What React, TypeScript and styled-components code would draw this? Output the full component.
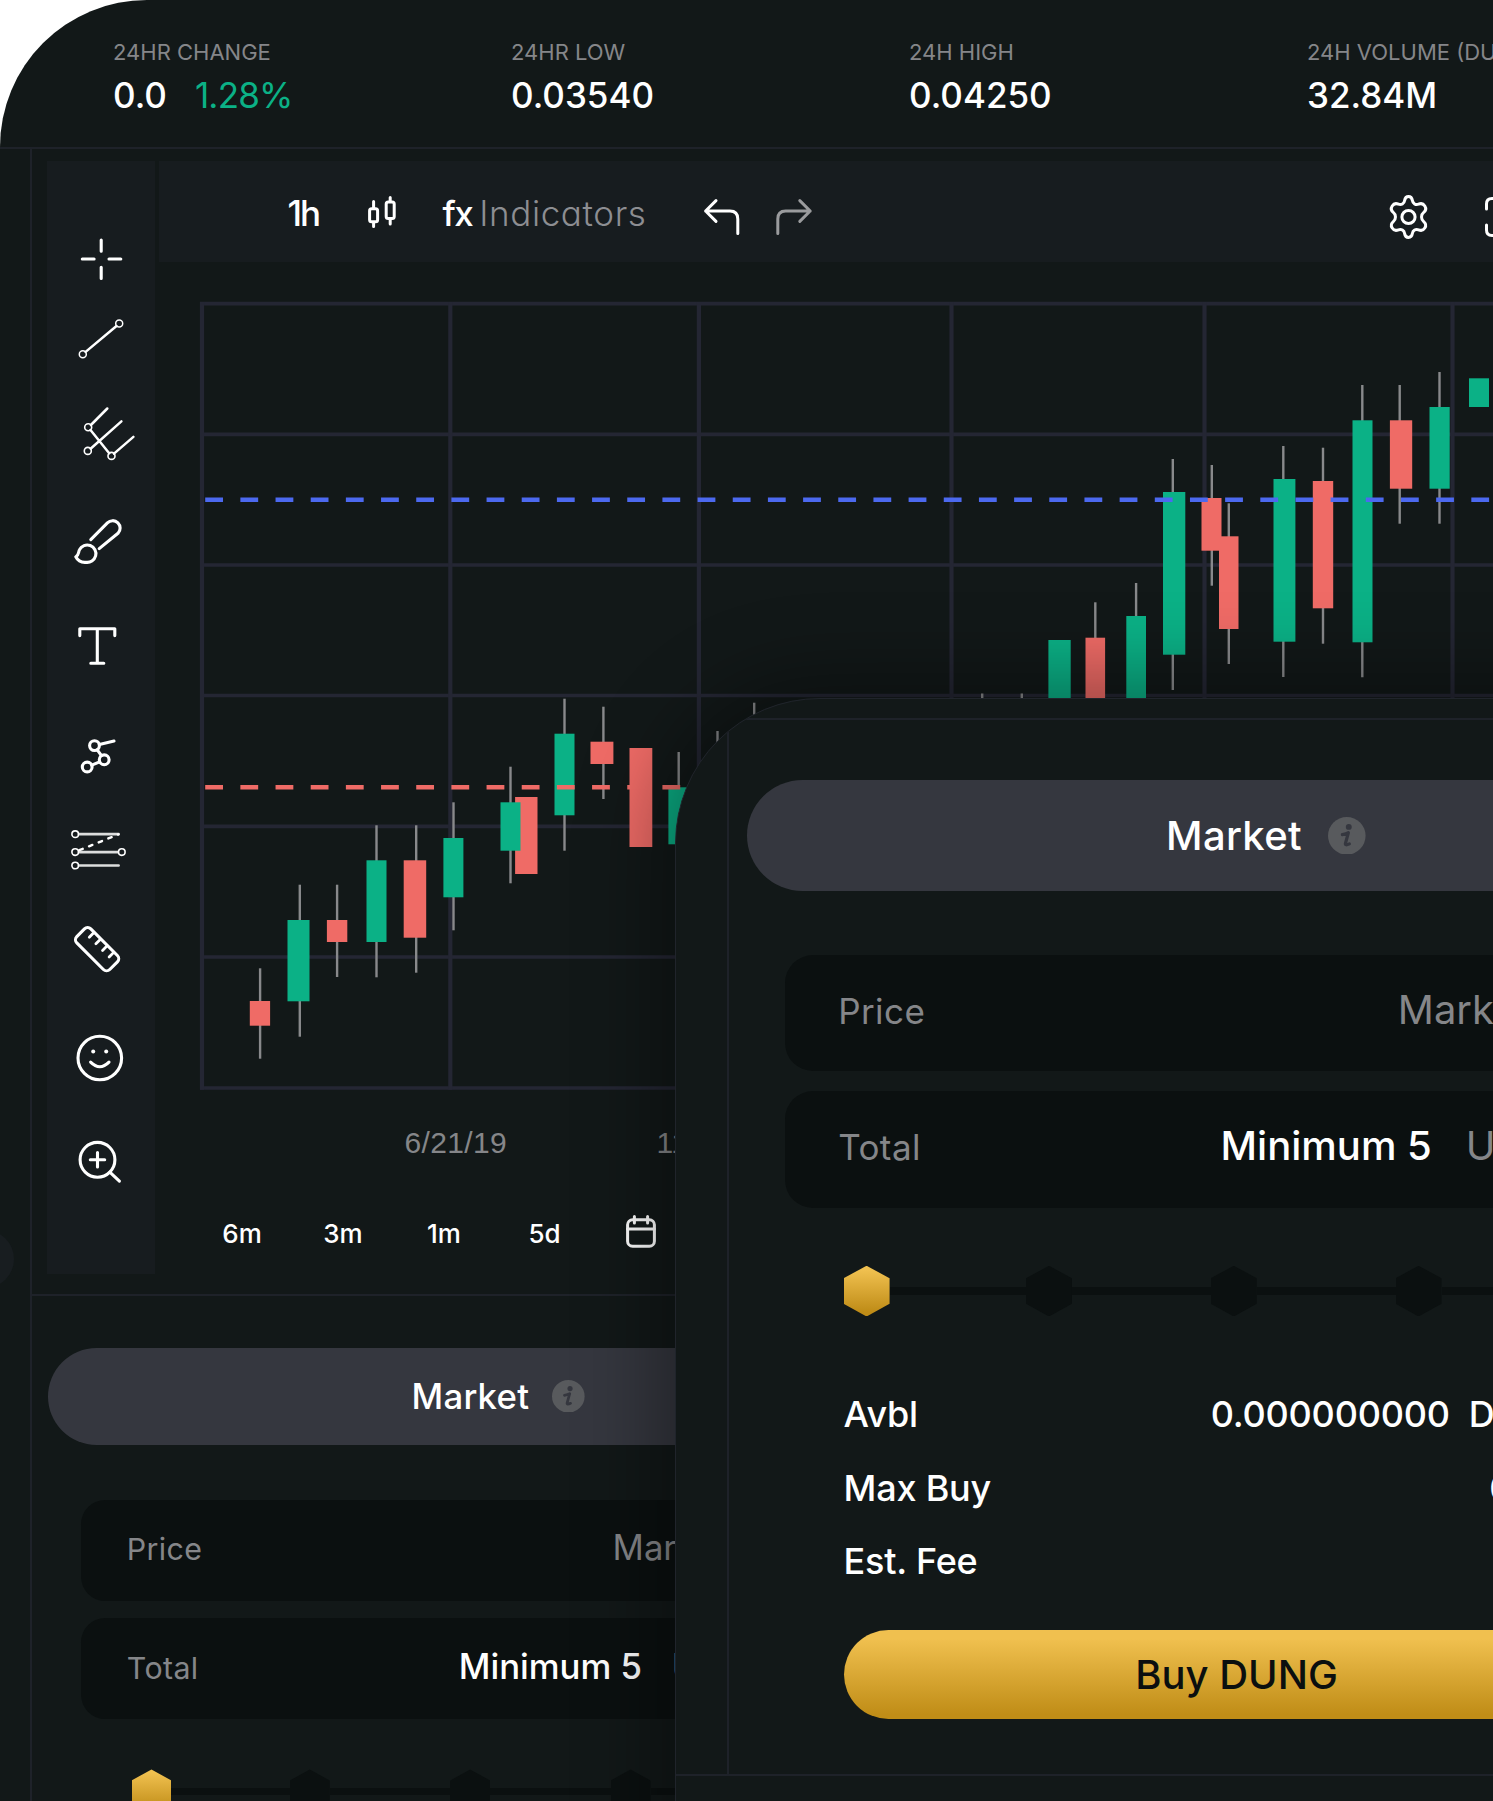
import React from 'react';
import styled, { createGlobalStyle } from 'styled-components';

const c = {
  bg: '#121818',
  panel: '#171c1f',
  field: '#0b1010',
  line: '#1e2229',
  grid: '#242633',
  up: '#0bb186',
  down: '#ef6b66',
  wick: '#88898b',
  muted: '#858689',
  pill: '#35373f',
};

const GlobalStyle = createGlobalStyle`
  body {
    margin: 0;
    background: #fff;
    overflow: hidden;
  }
  *, *::before, *::after { box-sizing: border-box; }
`;

const Frame = styled.div`
  position: relative;
  width: 1493px;
  height: 1801px;
  overflow: hidden;
  display: flex;
  flex-direction: column;
  background: ${c.bg};
  border-top-left-radius: 147px;
  color: #fff;
  font-family: Inter, 'Liberation Sans', sans-serif;
  white-space: nowrap;
`;

/* ---------- header stats ---------- */

const Header = styled.header`
  flex: none;
  height: 149px;
  padding: 38px 0 0 113px;
  display: grid;
  grid-template-columns: repeat(4, 398px);
  border-bottom: 2px solid ${c.line};
`;

const Stat = styled.div`
  display: flex;
  flex-direction: column;
`;

const StatLabel = styled.span`
  font-size: 22px;
  line-height: 28px;
  color: ${c.muted};
`;

const StatValue = styled.span`
  display: flex;
  gap: 28px;
  margin-top: 8px;
  font-size: 35px;
  line-height: 43px;
  font-weight: 500;
`;

const Gain = styled.span`
  color: ${c.up};
  font-weight: 400;
  letter-spacing: -0.8px;
`;

/* ---------- body ---------- */

const Body = styled.div`
  flex: 1;
  min-height: 0;
  display: flex;
`;

const Gutter = styled.div<{ $w: number }>`
  position: relative;
  flex: none;
  width: ${(p) => p.$w}px;
  border-right: 2px solid ${c.line};
`;

const DrawerHandle = styled.div`
  position: absolute;
  left: -44px;
  top: 1081px;
  width: 58px;
  height: 58px;
  border-radius: 50%;
  background: #181d20;
`;

const Main = styled.main`
  flex: 1;
  min-width: 0;
`;

const Terminal = styled.section`
  display: flex;
  gap: 4px;
  height: 1147px;
  padding: 12px 0 0 14.5px;
  border-bottom: 2px solid ${c.line};
`;

const Sidebar = styled.nav`
  flex: none;
  width: 108px;
  height: 1112.5px;
  background: ${c.panel};
  display: flex;
  flex-direction: column;
  align-items: center;
  padding-right: 1.4px;
`;

const Tool = styled.svg<{ $gap: number }>`
  flex: none;
  width: 64px;
  height: 64px;
  margin-top: ${(p) => p.$gap}px;
  overflow: visible;
  fill: none;
  stroke: #fff;
  stroke-width: 3.1;
  stroke-linecap: round;
  stroke-linejoin: round;
`;

const ChartColumn = styled.div`
  flex: 1;
  min-width: 0;
`;

const Toolbar = styled.div`
  height: 101px;
  padding-left: 127px;
  background: ${c.panel};
  display: grid;
  grid-template-columns: 81px 75px 262px 72px 612px 96px 42px;
  align-items: center;
`;

const ToolText = styled.span<{ $spacing?: number; $shift?: number }>`
  font-size: 35px;
  line-height: 42px;
  font-weight: 500;
  letter-spacing: ${(p) => p.$spacing ?? 0}px;
  padding: 3px 0 0 ${(p) => p.$shift ?? 0}px;
`;

const IndicatorsButton = styled.span`
  padding-top: 3px;
`;

const Indicators = styled.span`
  margin-left: 7px;
  font-weight: 300;
  font-size: 35px;
  letter-spacing: 0.6px;
  font-feature-settings: 'cv11';
  color: #8d8e92;
`;

const BarIcon = styled.svg<{ $dim?: boolean }>`
  display: block;
  overflow: visible;
  fill: none;
  stroke: ${(p) => (p.$dim ? '#9a9b9d' : '#fff')};
  stroke-width: 3;
  stroke-linecap: round;
  stroke-linejoin: round;
`;

const CalendarIcon = styled(BarIcon)`
  margin: -4px 0 0 32px;
`;

const Plot = styled.svg`
  display: block;
  width: 1334.5px;
  height: 838px;
`;

const Dates = styled.div`
  display: grid;
  grid-template-columns: repeat(4, 252px);
  padding: 25px 0 0 246px;
  height: 103.5px;
  font-family: 'Liberation Sans', Arial, sans-serif;
  font-size: 30px;
  line-height: 36px;
  letter-spacing: 0.35px;
  color: ${c.muted};
`;

const Ranges = styled.div`
  display: grid;
  grid-template-columns: 101px 101px 100.5px 100px auto;
  padding-left: 33px;
  height: 60px;
  align-items: center;
`;

const Range = styled.span`
  width: 101px;
  text-align: center;
  font-size: 26px;
  font-weight: 500;
  line-height: 32px;
`;

/* ---------- order form (sized in em so it can be shown at two scales) ---------- */

const Form = styled.section<{ $size: number; $top: number; $left: number }>`
  font-size: ${(p) => p.$size}px;
  padding: ${(p) => p.$top}px 0 0 ${(p) => p.$left}px;
  width: 26.4em;
`;

const TypePill = styled.div`
  width: 25.93em;
  height: 2.79em;
  border-radius: 1.4em;
  background: ${c.pill};
  display: flex;
  align-items: center;
  justify-content: center;
  gap: 0.66em;
  font-weight: 500;
  letter-spacing: 0.008em;
`;

const InfoIcon = styled.svg`
  width: 0.94em;
  height: 0.94em;
  display: block;
`;

const Field = styled.div<{ $label: number }>`
  width: 24.05em;
  height: 2.9125em;
  margin-left: 0.94em;
  border-radius: 0.7em;
  background: ${c.field};
  display: grid;
  grid-template-columns: ${(p) => p.$label}em auto auto;
  justify-content: start;
  align-items: baseline;
  padding: 0.7725em 0 0 1.33em;
  & + & { margin-top: 0.505em; }
`;

const Fields = styled.div`
  padding-top: 1.585em;
`;

const FieldLabel = styled.span`
  font-size: 0.875em;
  letter-spacing: 0.012em;
  color: ${c.muted};
`;

const FieldValue = styled.span<{ $muted?: boolean }>`
  color: ${(p) => (p.$muted ? c.muted : '#fff')};
  font-weight: ${(p) => (p.$muted ? 400 : 500)};
  line-height: 1.21;
  & + & { margin-left: 0.85em; }
`;

const Slider = styled.div`
  display: flex;
  align-items: center;
  margin: 1.445em 0 0 2.405em;
`;

const Stop = styled.span<{ $on?: boolean }>`
  flex: none;
  width: 1.15em;
  height: 1.27em;
  clip-path: polygon(50% 0, 100% 25%, 100% 75%, 50% 100%, 0 75%, 0 25%);
  background: ${(p) => (p.$on ? 'linear-gradient(#f0c04f 8%, #bf8c17 92%)' : c.field)};
`;

const Track = styled.span<{ $w: number }>`
  flex: none;
  width: ${(p) => p.$w}em;
  height: 0.2em;
  background: ${c.field};
`;

const Summary = styled.div`
  margin: 1.53em 0 0.785em 2.405em;
`;

const SummaryRow = styled.div<{ $label: number }>`
  display: grid;
  grid-template-columns: ${(p) => p.$label}em auto auto;
  justify-content: start;
  height: 1.8375em;
  align-items: center;
  span {
    font-size: 0.9em;
    font-weight: 450;
    letter-spacing: -0.006em;
  }
  span + span + span { margin-left: 0.53em; }
`;

const BuyButton = styled.button`
  display: block;
  margin: 0 0 0 2.405em;
  padding: 0;
  width: 19.65em;
  height: 2.225em;
  border: 0;
  border-radius: 1.12em;
  background: linear-gradient(#f0c04f 10%, #c08d17 95%);
  color: #0b0f0f;
  font: 500 1em Inter, sans-serif;
`;

/* Floating, enlarged copy of the form lying over the terminal */
const Popout = styled.aside`
  position: absolute;
  left: 675px;
  top: 698px;
  width: 1160px;
  height: 1180px;
  background: ${c.bg};
  border: 1px solid #20242b;
  border-top-left-radius: 145px;
  overflow: hidden;
`;

const PopoutShadow = styled.div`
  position: absolute;
  left: 675px;
  top: 698px;
  width: 1160px;
  height: 1180px;
  border-top-left-radius: 145px;
  box-shadow: 0 0 74px 24px rgba(0, 0, 0, 0.34);
`;

const PopoutTop = styled.div`
  height: 21px;
  border-bottom: 2px solid ${c.line};
`;

const PopoutBody = styled.div`
  display: flex;
  height: 1056px;
  border-bottom: 2px solid ${c.line};
`;

/* ---------- data ---------- */

type Candle = { up?: boolean; body?: [number, number, number, number]; wick?: [number, number, number] };

// body: left, right, top, bottom; wick: x, top, bottom
const candles: Candle[] = [
  { body: [249.3, 269.6, 1001, 1025.7], wick: [259.6, 968.3, 1058.7] },
  { up: true, body: [287, 309, 920, 1001.3], wick: [299.3, 884.7, 1036.7] },
  { body: [326.4, 346.8, 920, 942], wick: [336.6, 884.7, 977] },
  { up: true, body: [366, 386, 860.3, 942], wick: [376, 825.3, 977.3] },
  { body: [403.2, 425.7, 860.3, 937.7], wick: [415.7, 825.3, 972.7] },
  { up: true, body: [442.9, 462.9, 838, 897.3], wick: [453, 802.3, 930.3] },
  { body: [514.6, 537, 797, 874] },
  { up: true, body: [500, 520, 802.3, 850.7], wick: [510, 766.7, 883.3] },
  { up: true, body: [554, 574, 733.7, 815.3], wick: [564, 698.7, 850.7] },
  { body: [590, 612.9, 741.7, 764], wick: [602.9, 706.7, 799] },
  { body: [629, 651.8, 748, 847] },
  { up: true, body: [667.9, 690, 787.3, 844.3], wick: [678.2, 752, 787] },
  { wick: [717, 731, 800] },
  { wick: [753.7, 702.7, 800] },
  { wick: [981.7, 693.5, 760] },
  { wick: [1021.3, 693.5, 760] },
  { up: true, body: [1047.9, 1070.2, 640, 760] },
  { body: [1085, 1104.6, 637.7, 760], wick: [1094.8, 602.3, 760] },
  { up: true, body: [1125.8, 1145.5, 616, 760], wick: [1135.6, 583, 760] },
  { up: true, body: [1162.5, 1184.8, 492, 654.7], wick: [1172.3, 459, 690] },
  { body: [1201, 1221, 498, 550.7], wick: [1211.3, 465, 585.7] },
  { body: [1218.5, 1238, 536.3, 629], wick: [1228.3, 503.3, 664] },
  { up: true, body: [1273, 1294.9, 479, 641.7], wick: [1282.8, 446, 677] },
  { body: [1312.3, 1332.7, 481, 608.3], wick: [1322.5, 447.7, 643.7] },
  { up: true, body: [1352, 1372, 420.3, 642.3], wick: [1361.8, 385, 677.3] },
  { body: [1389.4, 1411.7, 420.3, 488.7], wick: [1399.2, 385, 523.7] },
  { up: true, body: [1429, 1449.2, 407, 488.7], wick: [1439, 372, 523.7] },
  { up: true, body: [1468.5, 1488.5, 378.3, 407] },
];

const rows = [303.7, 434.3, 565, 695.5, 826.3, 957, 1088];
const cols = [201.5, 449.8, 698.4, 951, 1204, 1452];

function PriceChart() {
  return (
    <Plot viewBox="158.5 262 1334.5 838">
      <g stroke={c.grid} strokeWidth={3.7}>
        {rows.map((y) => (
          <line key={y} x1={199.5} x2={1500} y1={y} y2={y} />
        ))}
        {cols.map((x) => (
          <line key={x} x1={x} x2={x} y1={302} y2={1089.8} strokeWidth={4.2} />
        ))}
      </g>
      {candles.map((k, i) => (
        <g key={i}>
          {k.wick && (
            <line x1={k.wick[0]} x2={k.wick[0]} y1={k.wick[1]} y2={k.wick[2]} stroke={c.wick} strokeWidth={2.4} />
          )}
          {k.body && (
            <rect
              x={k.body[0]}
              y={k.body[2]}
              width={k.body[1] - k.body[0]}
              height={k.body[3] - k.body[2]}
              fill={k.up ? c.up : c.down}
            />
          )}
        </g>
      ))}
      <g strokeWidth={4.4} strokeDasharray="17.8 17.37">
        <line x1={204.7} x2={1493} y1={499.7} y2={499.7} stroke="#4c69ef" />
        <line x1={204.7} x2={1493} y1={787.2} y2={787.2} stroke={c.down} />
      </g>
    </Plot>
  );
}

function ToolRail() {
  return (
    <Sidebar>
      <Tool $gap={65.5}>
        <path d="M33.2 13v11.3M33.2 40.3v11.2M14.3 32h11.8M41 32h11.8" />
      </Tool>
      <Tool $gap={16.5}>
        <path d="M17.6 44.9 48.5 19" strokeWidth={2.5} />
        <g strokeWidth={1.5}>
          <circle cx="51.2" cy="16.6" r="3.5" />
          <circle cx="14.8" cy="47.3" r="3.5" />
        </g>
      </Tool>
      <Tool $gap={28.5}>
        <path d="M22.9 25 39.3 8.5M22.6 48.7 53.4 21.4M46 53.6 65.4 36.9M22.5 30 41.2 53.2" strokeWidth={2.5} />
        <g strokeWidth={1.6}>
          <circle cx="20.2" cy="27.3" r="3.5" />
          <circle cx="19.8" cy="50.9" r="3.5" />
          <circle cx="43.5" cy="55.9" r="3.5" />
        </g>
      </Tool>
      <Tool $gap={45.5}>
        <path d="M22.8 30.6 39.4 13.9a7.4 7.4 0 0 1 10.6 10.4L31.2 39.6" />
        <path d="M7.8 47.8C11.2 46 10.2 43.2 11.4 40.9A8.7 8.7 0 1 1 17.8 53.3C13.4 53.6 9.6 51.4 7.8 47.8Z" />
      </Tool>
      <Tool $gap={41}>
        <path d="M11.8 21.6V14.8H46.8V21.6M29.3 14.8V49.2M22.8 49.2H35.8" />
      </Tool>
      <Tool $gap={44}>
        <circle cx="26.5" cy="23.6" r="4.9" />
        <circle cx="36.2" cy="37.8" r="4.9" />
        <circle cx="19.2" cy="45" r="4.9" />
        <path d="M31.4 22.6 46 19M29.3 27.8 33.4 33.6M23.8 43.2 31.6 39.8" />
      </Tool>
      <Tool $gap={31.5}>
        <path d="M11 16.2H50.6M11 34.1H49.8M11 47.5H50.6" stroke="#dcdddd" strokeWidth={2.7} />
        <path d="M11.4 32.2 50.4 16.4" strokeWidth={2.4} strokeDasharray="3.6 6.8" />
        <g strokeWidth={1.6}>
          <circle cx="7.2" cy="16.2" r="3.3" />
          <circle cx="7.2" cy="34.1" r="3.3" />
          <circle cx="7.2" cy="47.5" r="3.3" />
          <circle cx="53.8" cy="34.1" r="3.3" />
        </g>
      </Tool>
      <Tool $gap={35.5}>
        <g transform="translate(29.1 32.2) rotate(45)">
          <rect x="-23.3" y="-9.9" width="46.6" height="19.8" rx="4.5" />
          <path d="M-14 -9.5v6.5M-4.7 -9.5v6.5M4.7 -9.5v6.5M14 -9.5v6.5" strokeWidth={2.8} />
        </g>
      </Tool>
      <Tool $gap={45}>
        <circle cx="31.8" cy="32" r="21.8" />
        <path d="M22.6 36.2Q31.8 45.4 41 36.2" />
        <g fill="#fff" stroke="none">
          <circle cx="25.2" cy="25.4" r="2" />
          <circle cx="38.2" cy="25.4" r="2" />
        </g>
      </Tool>
      <Tool $gap={39.5}>
        <circle cx="29.5" cy="29.8" r="17.4" />
        <path d="M41.8 42.2 51.4 51.2M29.5 22.6V37M22.3 29.8H36.7" />
      </Tool>
    </Sidebar>
  );
}

function TopBar() {
  return (
    <Toolbar>
      <ToolText $spacing={-2} $shift={2}>1h</ToolText>
      <BarIcon width="30" height="32" viewBox="-1 0 30 32">
        <rect x="1.6" y="12.8" width="8" height="13" rx="2" />
        <rect x="18.2" y="6" width="8" height="16.5" rx="2" />
        <path d="M5.6 5.4V12M5.6 26.5V30.4M22.2 1.4V5.4M22.2 23.2V28" />
      </BarIcon>
      <IndicatorsButton>
        <ToolText $spacing={-1.5} $shift={1}>fx</ToolText>
        <Indicators>Indicators</Indicators>
      </IndicatorsButton>
      <BarIcon width="36" height="36" viewBox="0 0 36 36" transform="translate(0 5)">
        <path d="M12 1.6 1.6 12 12 22.4M1.6 12H26Q33.8 12 33.8 20V34.6" />
      </BarIcon>
      <BarIcon $dim width="36" height="36" viewBox="0 0 36 36" transform="translate(0 5)">
        <path d="M23.8 1.6 34.2 12 23.8 22.4M34.2 12H9.6Q1.8 12 1.8 20V34.6" />
      </BarIcon>
      <BarIcon width="40" height="44" viewBox="-0.500 0 40 44" transform="translate(0 5)">
        <path d="M16.1 5.6C16.5 3 17.8 1.5 20 1.5S23.5 3 23.9 5.6C24.3 8.6 27.3 10.3 30 9.2C32.6 8.1 34.700 8.4 36.300 11C38 13.700 37.400 15.600 35.200 17.400C32.300 19.600 32.300 24.400 35.200 26.600C37.400 28.400 38 30.300 36.300 33C34.700 35.600 32.600 35.900 30 34.800C27.300 33.700 24.300 35.400 23.900 38.400C23.500 41 22.200 42.500 20 42.500S16.500 41 16.100 38.400C15.700 35.400 12.700 33.700 10 34.800C7.400 35.900 5.300 35.600 3.700 33C2 30.300 2.600 28.400 4.800 26.600C7.700 24.400 7.700 19.600 4.800 17.400C2.600 15.600 2 13.700 3.700 11C5.300 8.400 7.400 8.100 10 9.200C12.700 10.300 15.700 8.600 16.100 5.600Z" />
        <circle cx="20" cy="22" r="6.600" />
      </BarIcon>
      <BarIcon width="40" height="40" viewBox="-1 0 40 40" transform="translate(0 5)">
        <path d="M1.500 12V7Q1.500 1.500 7 1.500H12M28 1.500H33Q38.500 1.500 38.500 7V12M38.500 28V33Q38.500 38.500 33 38.500H28M12 38.500H7Q1.500 38.500 1.500 33V28" />
      </BarIcon>
    </Toolbar>
  );
}

function OrderForm({ size, top, left }: { size: number; top: number; left: number }) {
  return (
    <Form $size={size} $top={top} $left={left}>
      <TypePill>
        <span>Market</span>
        <InfoIcon viewBox="0 0 38 38">
          <circle cx="19" cy="19" r="19" fill="#585a5d" />
          <circle cx="21" cy="10" r="3" fill={c.pill} />
          <path
            d="M14.500 17.800Q18.600 17 20.600 15.900L17.600 26.800Q17.200 29.200 21.600 27.200"
            fill="none"
            stroke={c.pill}
            strokeWidth="3.200"
            strokeLinecap="round"
            strokeLinejoin="round"
          />
        </InfoIcon>
      </TypePill>
      <Fields>
        <Field $label={13.99}>
          <FieldLabel>Price</FieldLabel>
          <FieldValue $muted>Market</FieldValue>
        </Field>
        <Field $label={9.56}>
          <FieldLabel>Total</FieldLabel>
          <FieldValue>Minimum 5</FieldValue>
          <FieldValue $muted>USDT</FieldValue>
        </Field>
      </Fields>
      <Slider>
        <Stop $on />
        {[3.41, 3.47, 3.47, 3.47].map((w, i) => (
          <React.Fragment key={i}>
            <Track $w={w} />
            <Stop />
          </React.Fragment>
        ))}
      </Slider>
      <Summary>
        <SummaryRow $label={9.18}>
          <span>Avbl</span>
          <span>0.000000000</span>
          <span>DUNG</span>
        </SummaryRow>
        <SummaryRow $label={16.14}>
          <span>Max Buy</span>
          <span>0</span>
        </SummaryRow>
        <SummaryRow $label={16.14}>
          <span>Est. Fee</span>
        </SummaryRow>
      </Summary>
      <BuyButton>Buy DUNG</BuyButton>
    </Form>
  );
}

export default function App() {
  return (
    <>
      <GlobalStyle />
      <Frame>
        <Header>
          <Stat>
            <StatLabel>24HR CHANGE</StatLabel>
            <StatValue>
              <span>0.0</span>
              <Gain>1.28%</Gain>
            </StatValue>
          </Stat>
          <Stat>
            <StatLabel>24HR LOW</StatLabel>
            <StatValue>0.03540</StatValue>
          </Stat>
          <Stat>
            <StatLabel>24H HIGH</StatLabel>
            <StatValue>0.04250</StatValue>
          </Stat>
          <Stat>
            <StatLabel>24H VOLUME (DUNG)</StatLabel>
            <StatValue>32.84M</StatValue>
          </Stat>
        </Header>
        <Body>
          <Gutter $w={32}>
            <DrawerHandle />
          </Gutter>
          <Main>
            <Terminal>
              <ToolRail />
              <ChartColumn>
                <TopBar />
                <PriceChart />
                <Dates>
                  <span>6/21/19</span>
                  <span>11/21/19</span>
                </Dates>
                <Ranges>
                  <Range>6m</Range>
                  <Range>3m</Range>
                  <Range>1m</Range>
                  <Range>5d</Range>
                  <CalendarIcon width="30" height="33" viewBox="0 0 30 33">
                    <rect x="1.600" y="4.800" width="26.800" height="26.400" rx="5" />
                    <path d="M1.600 14H28.400M8.400 1.600V8M21.600 1.600V8" />
                  </CalendarIcon>
                </Ranges>
              </ChartColumn>
            </Terminal>
            <OrderForm size={34.72} top={51.7} left={16} />
          </Main>
        </Body>
        <PopoutShadow />
        <Popout>
          <PopoutTop />
          <PopoutBody>
            <Gutter $w={53} />
            <OrderForm size={40} top={59.7} left={18.4} />
          </PopoutBody>
        </Popout>
      </Frame>
    </>
  );
}
